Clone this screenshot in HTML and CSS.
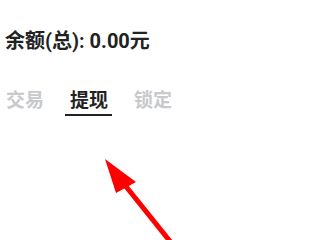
FILE: index.html
```
<!DOCTYPE html>
<html>
<head>
<meta charset="utf-8">
<link rel="stylesheet" href="styles.css">
</head>
<body>
<div class="page">
  <div class="balance">余额(总): 0.00元</div>
  <div class="tabs">
    <div class="tab">交易</div>
    <div class="tab active">提现</div>
    <div class="tab">锁定</div>
  </div>
</div>
<svg class="arrow" width="320" height="240" viewBox="0 0 320 240">
  <line x1="124" y1="184" x2="177" y2="250" stroke="#ff0000" stroke-width="5"/>
  <polygon points="105,159 136,182 116,193" fill="#ff0000"/>
</svg>
</body>
</html>
```
FILE: styles.css
```
html, body {
  margin: 0;
  padding: 0;
  background: #ffffff;
  width: 320px;
  height: 240px;
  overflow: hidden;
  position: relative;
}
.page {
  display: flex;
  flex-direction: column;
  padding: 29px 0 0 5px;
  font-family: "Roboto", "Noto Sans CJK SC", sans-serif;
}
.balance {
  font-size: 20px;
  font-weight: 700;
  color: #222222;
  line-height: 24px;
}
.tabs {
  display: flex;
  margin-top: 36px;
}
.tab {
  font-size: 19px;
  font-weight: 700;
  color: #c8c9cc;
  line-height: 24px;
  padding: 0 0 3px 1px;
  width: 64px;
  box-sizing: border-box;
}
.tab.active {
  color: #222222;
  position: relative;
}
.tab.active::after {
  content: "";
  position: absolute;
  left: -4px;
  width: 47px;
  bottom: 0;
  height: 2px;
  background: #222222;
}
.arrow {
  position: absolute;
  left: 0;
  top: 0;
}
```
